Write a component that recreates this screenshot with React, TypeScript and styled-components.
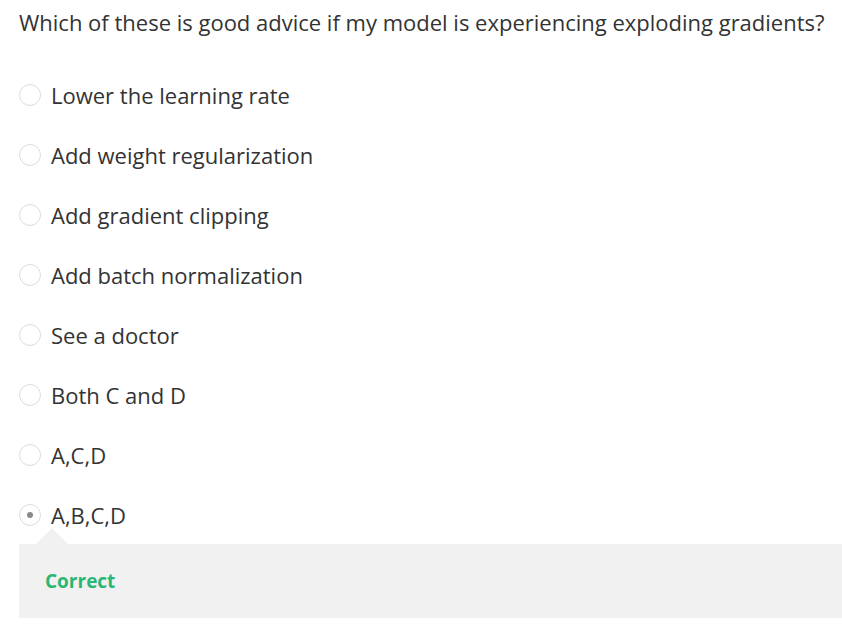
import React from "react";
import styled, { createGlobalStyle } from "styled-components";

const Global = createGlobalStyle`
  html, body { margin: 0; padding: 0; background: #fff; }
  body { font-family: "Open Sans", "Liberation Sans", sans-serif; color: #333; }
`;

const Page = styled.div`
  padding: 7px 0 0 19px;
`;

const Question = styled.div`
  font-size: 22px;
  line-height: 30px;
  color: #333;
  margin-bottom: 43px;
`;

const Options = styled.div`
  display: flex;
  flex-direction: column;
  gap: 30px;
`;

const Option = styled.label`
  display: flex;
  align-items: center;
  gap: 10px;
  height: 30px;
  font-size: 22px;
  color: #333;
`;

const Radio = styled.span<{ $checked?: boolean }>`
  box-sizing: border-box;
  width: 22px;
  height: 22px;
  border-radius: 50%;
  border: 1px solid #dcdcdc;
  display: flex;
  align-items: center;
  justify-content: center;
  flex: none;
  &::after {
    content: "";
    width: 6px;
    height: 6px;
    border-radius: 50%;
    background: ${(p) => (p.$checked ? "#8a8a8a" : "transparent")};
  }
`;

const Feedback = styled.div`
  position: relative;
  margin-top: 14px;
  background: #f1f1f1;
  height: 74px;
  display: flex;
  align-items: center;
  padding-left: 26px;
  &::before {
    content: "";
    position: absolute;
    left: 17px;
    top: -16px;
    border-left: 16px solid transparent;
    border-right: 16px solid transparent;
    border-bottom: 16px solid #f1f1f1;
  }
`;

const Verdict = styled.span`
  color: #2bb673;
  font-weight: 700;
  font-size: 19px;
`;

const options = [
  "Lower the learning rate",
  "Add weight regularization",
  "Add gradient clipping",
  "Add batch normalization",
  "See a doctor",
  "Both C and D",
  "A,C,D",
  "A,B,C,D",
];

export default function App() {
  return (
    <Page>
      <Global />
      <Question>
        Which of these is good advice if my model is experiencing exploding gradients?
      </Question>
      <Options>
        {options.map((o, i) => (
          <Option key={o}>
            <Radio $checked={i === options.length - 1} />
            {o}
          </Option>
        ))}
      </Options>
      <Feedback>
        <Verdict>Correct</Verdict>
      </Feedback>
    </Page>
  );
}
